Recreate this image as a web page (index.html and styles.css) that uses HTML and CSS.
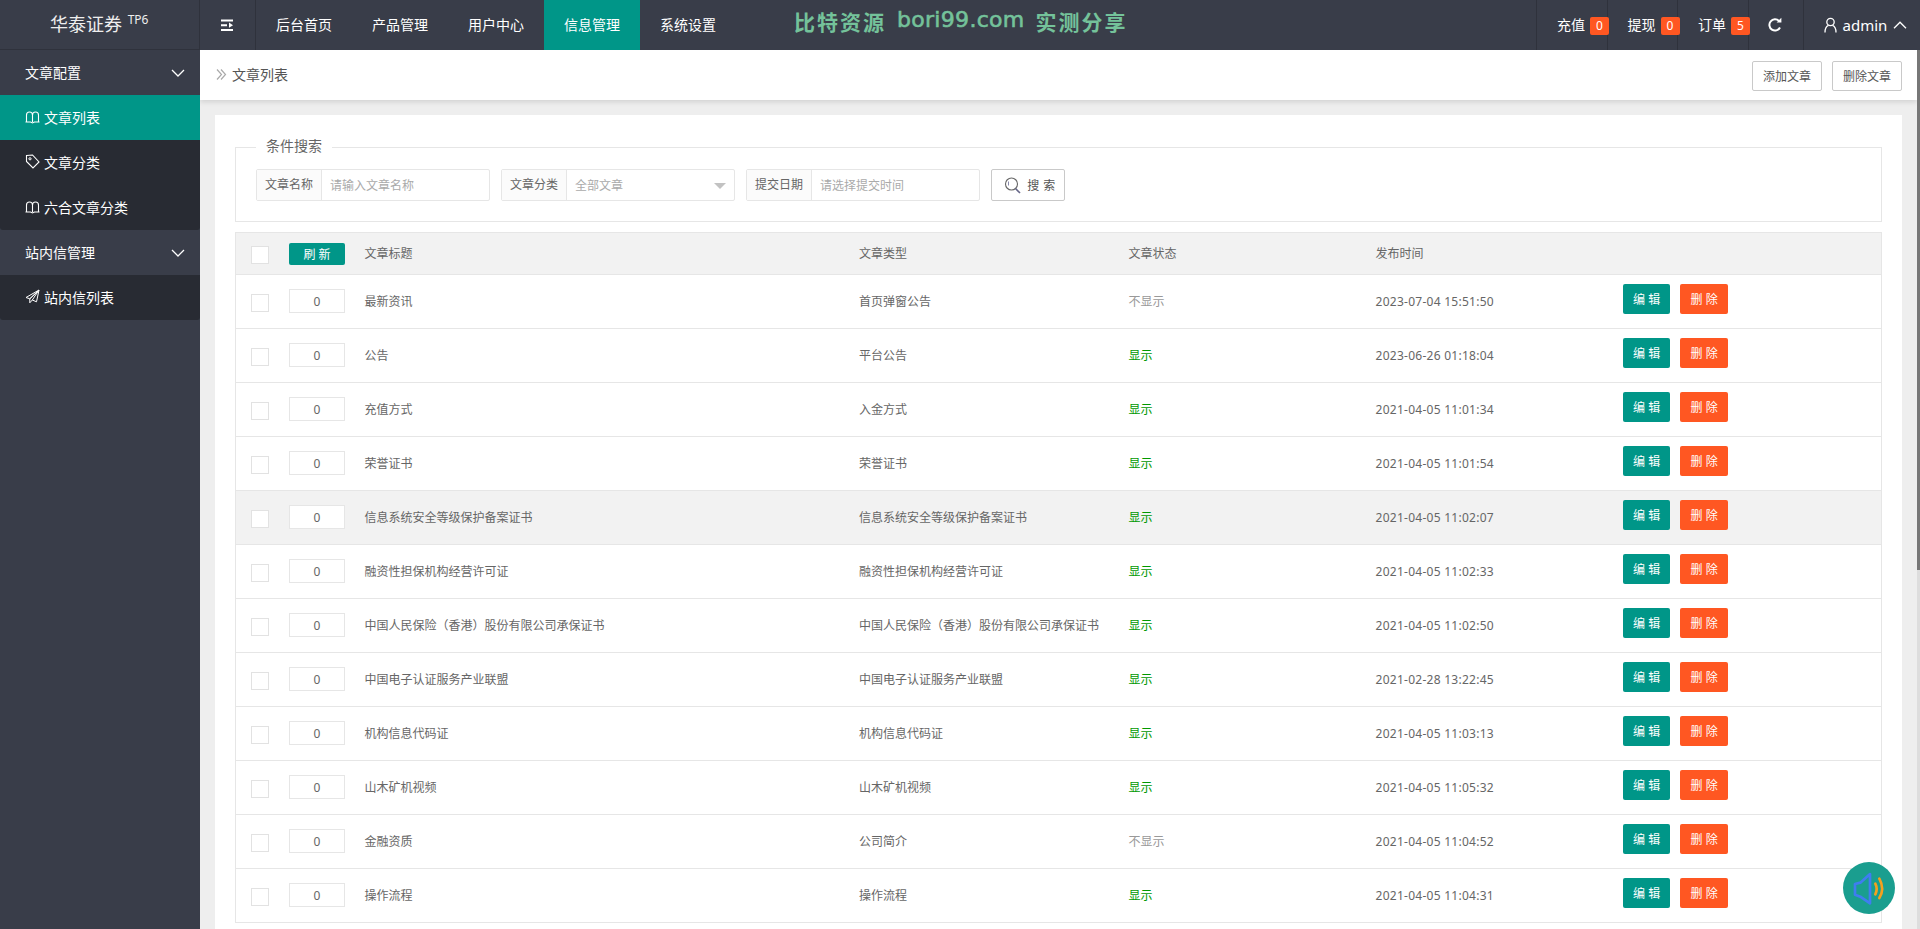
FILE: index.html
```html
<!DOCTYPE html>
<html lang="zh-CN">
<head>
<meta charset="utf-8">
<title>文章列表</title>
<link rel="stylesheet" href="styles.css">
</head>
<body>
<header class="topbar">
  <div class="logo">华泰证券 <sup>TP6</sup></div>
  <div class="toggle">
    <svg width="14" height="14" viewBox="0 0 14 14"><path d="M1 2.5H13M1 12H13M1 7.2H7" stroke="#fff" stroke-width="2" fill="none"/><path d="M9 4.6L13 7.2L9 9.8Z" fill="#fff"/></svg>
  </div>
  <nav class="mainnav">
    <a class="navitem">后台首页</a>
    <a class="navitem">产品管理</a>
    <a class="navitem">用户中心</a>
    <a class="navitem active">信息管理</a>
    <a class="navitem">系统设置</a>
  </nav>
  <div class="brandmark"><span>比特资源</span><span class="brandlatin">bori99.com</span><span>实测分享</span></div>
  <div class="topright">
    <div class="stat">充值<span class="badge">0</span></div>
    <div class="stat">提现<span class="badge">0</span></div>
    <div class="stat">订单<span class="badge">5</span></div>
    <div class="refresh">
      <svg width="16" height="16" viewBox="0 0 16 16"><path d="M13 10.5A5.6 5.6 0 1 1 12 4" stroke="#fff" stroke-width="2" fill="none"/><path d="M9.6 5.4H14.4V0.8Z" fill="#fff"/></svg>
    </div>
    <div class="user">
      <svg width="13" height="16" viewBox="0 0 13 16"><circle cx="6.5" cy="5" r="3.7" stroke="#fff" stroke-width="1.3" fill="none"/><path d="M1 15.5C1 11 3 9 4.5 8.4M12 15.5C12 11 10 9 8.5 8.4" stroke="#fff" stroke-width="1.3" fill="none"/></svg>
      <span class="username">admin</span>
      <svg width="14" height="8" viewBox="0 0 14 8"><path d="M1 7.2L7 1.2L13 7.2" stroke="#fff" stroke-width="1.3" fill="none"/></svg>
    </div>
  </div>
</header>
<div class="shell">
  <aside class="sidebar">
    <div class="group">文章配置<svg class="chev" width="14" height="8" viewBox="0 0 14 8"><path d="M1 1L7 7L13 1" stroke="#fff" stroke-width="1.3" fill="none"/></svg></div>
    <ul class="sublist">
      <li class="subitem current"><svg width="15" height="14" viewBox="0 0 15 14"><path d="M1.500 12V5C1.500 3 3 2 4.500 2C6 2 7.500 3 7.500 5C7.500 3 9 2 10.500 2C12 2 13.500 3 13.500 5V12M.5 12H5.500L7.500 13L9.500 12H14.500M7.500 5V12" stroke="#fff" stroke-width="1.100" fill="none"/></svg>文章列表</li>
      <li class="subitem"><svg width="15" height="15" viewBox="0 0 15 15"><path d="M1.500 1.500L7.500 1L14 8L8 14L1.500 7.500Z" stroke="#fff" stroke-width="1.100" fill="none"/><circle cx="5" cy="4.800" r="1.100" stroke="#fff" fill="none"/></svg>文章分类</li>
      <li class="subitem"><svg width="15" height="14" viewBox="0 0 15 14"><path d="M1.500 12V5C1.500 3 3 2 4.500 2C6 2 7.500 3 7.500 5C7.500 3 9 2 10.500 2C12 2 13.500 3 13.500 5V12M.5 12H5.500L7.500 13L9.500 12H14.500M7.500 5V12" stroke="#fff" stroke-width="1.100" fill="none"/></svg>六合文章分类</li>
    </ul>
    <div class="group">站内信管理<svg class="chev" width="14" height="8" viewBox="0 0 14 8"><path d="M1 1L7 7L13 1" stroke="#fff" stroke-width="1.3" fill="none"/></svg></div>
    <ul class="sublist">
      <li class="subitem"><svg width="15" height="15" viewBox="0 0 15 15"><path d="M14 1L1 8.500L4.800 9.800ZM14 1L4.800 9.800V13.800L7.300 11ZM14 1L11.500 12.800L7.300 11" stroke="#fff" stroke-width="1" fill="none"/></svg>站内信列表</li>
    </ul>
  </aside>
  <main class="main">
    <div class="pagehead">
      <div class="crumb">
        <svg width="11" height="11" viewBox="0 0 11 11"><path d="M1 .5L5.500 5.500L1 10.500M5 .5L9.500 5.500L5 10.500" stroke="#aaa" stroke-width="1.200" fill="none"/></svg>
        <span>文章列表</span>
      </div>
      <div class="headactions">
        <button class="btn-outline">添加文章</button>
        <button class="btn-outline">删除文章</button>
      </div>
    </div>
    <section class="card">
      <fieldset class="searchbox">
        <legend>条件搜索</legend>
        <form class="searchrow">
          <div class="field"><label class="fieldlabel">文章名称</label><input class="fieldinput" placeholder="请输入文章名称"></div>
          <div class="field select"><label class="fieldlabel">文章分类</label><input class="fieldinput" placeholder="全部文章"><i class="caret"></i></div>
          <div class="field"><label class="fieldlabel">提交日期</label><input class="fieldinput" placeholder="请选择提交时间"></div>
          <button type="button" class="btn-search">
            <svg width="18" height="17" viewBox="0 0 18 17"><circle cx="7.500" cy="7" r="6" stroke="#666" stroke-width="1.100" fill="none"/><path d="M4.500 4.500V8.500" stroke="#88a" fill="none"/><path d="M11.500 11.500L16 16" stroke="#668" stroke-width="1.600" fill="none"/></svg>
            <span class="searchlabel">搜 索</span>
          </button>
        </form>
      </fieldset>
      <table class="datatable">
        <colgroup>
          <col class="c1"><col class="c2"><col class="c3"><col class="c4"><col class="c5"><col class="c6"><col>
        </colgroup>
        <thead>
          <tr>
            <th><span class="check headcheck"></span></th>
            <th><button class="btn-refresh">刷 新</button></th>
            <th>文章标题</th><th>文章类型</th><th>文章状态</th><th>发布时间</th><th></th>
          </tr>
        </thead>
        <tbody>
          <tr><td><span class="check"></span></td><td><input class="sort" value="0"></td><td>最新资讯</td><td>首页弹窗公告</td><td class="off">不显示</td><td class="time">2023-07-04 15:51:50</td><td class="ops"><button class="btn-edit">编 辑</button><button class="btn-del">删 除</button></td></tr>
          <tr><td><span class="check"></span></td><td><input class="sort" value="0"></td><td>公告</td><td>平台公告</td><td class="on">显示</td><td class="time">2023-06-26 01:18:04</td><td class="ops"><button class="btn-edit">编 辑</button><button class="btn-del">删 除</button></td></tr>
          <tr><td><span class="check"></span></td><td><input class="sort" value="0"></td><td>充值方式</td><td>入金方式</td><td class="on">显示</td><td class="time">2021-04-05 11:01:34</td><td class="ops"><button class="btn-edit">编 辑</button><button class="btn-del">删 除</button></td></tr>
          <tr><td><span class="check"></span></td><td><input class="sort" value="0"></td><td>荣誉证书</td><td>荣誉证书</td><td class="on">显示</td><td class="time">2021-04-05 11:01:54</td><td class="ops"><button class="btn-edit">编 辑</button><button class="btn-del">删 除</button></td></tr>
          <tr class="hovered"><td><span class="check"></span></td><td><input class="sort" value="0"></td><td>信息系统安全等级保护备案证书</td><td>信息系统安全等级保护备案证书</td><td class="on">显示</td><td class="time">2021-04-05 11:02:07</td><td class="ops"><button class="btn-edit">编 辑</button><button class="btn-del">删 除</button></td></tr>
          <tr><td><span class="check"></span></td><td><input class="sort" value="0"></td><td>融资性担保机构经营许可证</td><td>融资性担保机构经营许可证</td><td class="on">显示</td><td class="time">2021-04-05 11:02:33</td><td class="ops"><button class="btn-edit">编 辑</button><button class="btn-del">删 除</button></td></tr>
          <tr><td><span class="check"></span></td><td><input class="sort" value="0"></td><td>中国人民保险（香港）股份有限公司承保证书</td><td>中国人民保险（香港）股份有限公司承保证书</td><td class="on">显示</td><td class="time">2021-04-05 11:02:50</td><td class="ops"><button class="btn-edit">编 辑</button><button class="btn-del">删 除</button></td></tr>
          <tr><td><span class="check"></span></td><td><input class="sort" value="0"></td><td>中国电子认证服务产业联盟</td><td>中国电子认证服务产业联盟</td><td class="on">显示</td><td class="time">2021-02-28 13:22:45</td><td class="ops"><button class="btn-edit">编 辑</button><button class="btn-del">删 除</button></td></tr>
          <tr><td><span class="check"></span></td><td><input class="sort" value="0"></td><td>机构信息代码证</td><td>机构信息代码证</td><td class="on">显示</td><td class="time">2021-04-05 11:03:13</td><td class="ops"><button class="btn-edit">编 辑</button><button class="btn-del">删 除</button></td></tr>
          <tr><td><span class="check"></span></td><td><input class="sort" value="0"></td><td>山木矿机视频</td><td>山木矿机视频</td><td class="on">显示</td><td class="time">2021-04-05 11:05:32</td><td class="ops"><button class="btn-edit">编 辑</button><button class="btn-del">删 除</button></td></tr>
          <tr><td><span class="check"></span></td><td><input class="sort" value="0"></td><td>金融资质</td><td>公司简介</td><td class="off">不显示</td><td class="time">2021-04-05 11:04:52</td><td class="ops"><button class="btn-edit">编 辑</button><button class="btn-del">删 除</button></td></tr>
          <tr><td><span class="check"></span></td><td><input class="sort" value="0"></td><td>操作流程</td><td>操作流程</td><td class="on">显示</td><td class="time">2021-04-05 11:04:31</td><td class="ops"><button class="btn-edit">编 辑</button><button class="btn-del">删 除</button></td></tr>
        </tbody>
      </table>
    </section>
  </main>
  <div class="scrolltrack"><div class="scrollthumb"></div></div>
</div>
<div class="floatbtn">
  <svg width="52" height="52" viewBox="0 0 156 156"><path d="M81 36L52 62L36 66V98L52 104L81 124Z" stroke="#3f7df0" stroke-width="8" stroke-linejoin="round" fill="none"/><path d="M97 65Q105 81 97 97M109 50Q126 81 109 108" stroke="#f5a01e" stroke-width="8" stroke-linecap="round" fill="none"/></svg>
</div>
</body>
</html>
```
FILE: styles.css
```css
* { box-sizing: border-box; }
html, body { margin: 0; height: 100%; overflow: hidden; }
body {
  display: flex;
  flex-direction: column;
  font-family: "Noto Sans", "Noto Sans CJK SC", sans-serif;
  font-size: 14px;
  color: #666;
  background: #eee;
}
button, input { font-family: inherit; }

/* top bar */
.topbar {
  flex: none;
  height: 50px;
  display: flex;
  align-items: stretch;
  background: #393d49;
  color: #fff;
}
.logo {
  width: 200px;
  border-right: 1px solid #2f323c;
  border-bottom: 1px solid #2f323c;
  padding-left: 50px;
  font-size: 18px;
  line-height: 48px;
  color: #eee;
  white-space: nowrap;
}
.logo sup { font-size: 12px; line-height: 0; vertical-align: 7px; margin-left: 1px; }
.toggle {
  width: 56px;
  border-right: 1px solid #2f323c;
  display: flex;
  align-items: center;
  justify-content: center;
  padding-right: 1px;
}
.mainnav { display: flex; }
.navitem {
  width: 96px;
  text-align: center;
  line-height: 50px;
  color: #fff;
}
.navitem.active { background: #009688; }
.brandmark {
  margin-left: 58px;
  display: flex;
  gap: 11px;
  align-items: flex-start;
  padding-top: 7px;
  font-size: 21px;
  font-weight: 700;
  line-height: 30px;
  letter-spacing: 2px;
  color: #74c29a;
  white-space: nowrap;
}
.brandlatin {
  font-family: "DejaVu Sans", sans-serif;
  font-size: 22px;
  font-weight: 400;
  letter-spacing: .3px;
  line-height: 26px;
  -webkit-text-stroke: .6px #74c29a;
}
.topright { margin-left: auto; display: flex; width: 384px; }
.stat {
  position: relative;
  width: 70.500px;
  border-left: 1px solid #2f323c;
  padding-left: 20px;
  line-height: 50px;
}
.badge {
  position: absolute;
  left: 53px;
  top: 17px;
  width: 19px;
  height: 18px;
  line-height: 18px;
  border-radius: 2px;
  background: #ff5722;
  color: #fff;
  font-size: 12px;
  text-align: center;
  z-index: 1;
}
.refresh {
  width: 55px;
  border-left: 1px solid #2f323c;
  display: flex;
  align-items: center;
  padding-left: 18px;
}
.user {
  flex: 1;
  border-left: 1px solid #2f323c;
  display: flex;
  align-items: center;
  padding-left: 20px;
}
.username { margin: 0 6px 0 6px; font-size: 15px; }

/* shell */
.shell { flex: 1; min-height: 0; display: flex; }
.sidebar { flex: none; width: 200px; background: #393d49; color: #fff; }
.group {
  height: 45px;
  line-height: 45px;
  padding-left: 25px;
  position: relative;
}
.chev { position: absolute; left: 171px; top: 19px; }
.sublist {
  list-style: none;
  margin: 0;
  padding: 0;
  background: #282b33;
  border-radius: 0 0 3px 3px;
}
.subitem {
  height: 45px;
  display: flex;
  align-items: center;
  gap: 4px;
  padding: 0 0 2px 25px;
}
.subitem.current { background: #009688; }

/* main */
.main {
  flex: 1;
  min-width: 0;
  overflow: hidden;
  background: #eee;
}
.scrolltrack { flex: none; width: 3px; background: #ddd; }
.scrollthumb { height: 520px; background: #777; }
.pagehead {
  height: 50px;
  background: #fff;
  box-shadow: 0 2px 5px rgba(0, 0, 0, .12);
  display: flex;
  align-items: center;
  justify-content: space-between;
  padding: 0 15px 0 16px;
  position: relative;
}
.crumb { display: flex; align-items: center; gap: 5px; color: #555; margin-bottom: 2px; }
.headactions { display: flex; gap: 10px; margin-top: 2px; }
.btn-outline {
  width: 70px;
  height: 30px;
  padding: 0;
  background: #fff;
  border: 1px solid #c9c9c9;
  border-radius: 2px;
  color: #555;
  font-size: 12px;
}
.card {
  margin: 15px;
  min-height: 1400px;
  padding: 22px 20px;
  background: #fff;
}
.searchbox {
  margin: 0;
  padding: 12px 20px 20px;
  border: 1px solid #e6e6e6;
  min-width: 0;
}
.searchbox legend {
  margin-left: 0;
  padding: 0 10px;
  height: 20px;
  font-size: 14px;
  line-height: 18px;
  color: #666;
}
.searchrow { display: flex; gap: 11px; }
.field {
  position: relative;
  width: 234px;
  height: 32px;
  display: flex;
  border: 1px solid #e6e6e6;
  border-radius: 2px;
}
.fieldlabel {
  flex: none;
  width: 65px;
  border-right: 1px solid #e6e6e6;
  background: #fbfbfb;
  font-size: 12px;
  line-height: 30px;
  text-align: center;
  color: #666;
}
.fieldinput {
  flex: 1;
  min-width: 0;
  border: 0;
  outline: 0;
  padding: 0 0 0 8px;
  font-size: 12px;
  color: #666;
  background: transparent;
}
.fieldinput::placeholder { color: #aaa; opacity: 1; }
.caret {
  position: absolute;
  right: 8px;
  top: 13px;
  border: 6px solid transparent;
  border-top-color: #c2c2c2;
  border-bottom: 0;
}
.btn-search {
  width: 74px;
  height: 32px;
  padding: 0 0 0 4px;
  display: flex;
  align-items: center;
  justify-content: center;
  gap: 5px;
  background: #fff;
  border: 1px solid #c9c9c9;
  border-radius: 2px;
  color: #555;
  font-size: 12px;
}
.searchlabel { letter-spacing: .5px; }

/* table */
.datatable {
  width: 100%;
  margin-top: 10px;
  table-layout: fixed;
  border-collapse: separate;
  border-spacing: 0;
  border: 1px solid #e6e6e6;
  border-bottom: 0;
  font-size: 12px;
}
.c1 { width: 38px; }
.c2 { width: 75.500px; }
.c3 { width: 494.500px; }
.c4 { width: 269.600px; }
.c5 { width: 247px; }
.c6 { width: 247.500px; }
.datatable th, .datatable td {
  padding: 0 0 0 15px;
  border-bottom: 1px solid #e6e6e6;
  font-weight: 400;
  text-align: left;
  vertical-align: top;
  white-space: nowrap;
}
.datatable th {
  height: 42px;
  line-height: 41px;
  background: #f2f2f2;
  color: #666;
}
.datatable td { height: 54px; line-height: 53px; color: #666; }
.datatable .hovered td { background: #f2f2f2; }
.check {
  display: block;
  width: 18px;
  height: 18px;
  margin-top: 19px;
  background: #fff;
  border: 1px solid #e2e2e2;
}
.check.headcheck { margin-top: 13px; }
.btn-refresh {
  display: block;
  width: 56px;
  height: 22px;
  margin-top: 10px;
  padding: 0;
  border: 0;
  border-radius: 2px;
  background: #009688;
  color: #fff;
  font-size: 12px;
}
.sort {
  display: block;
  width: 56px;
  height: 24px;
  margin-top: 14px;
  padding: 0;
  border: 1px solid #e6e6e6;
  background: #fff;
  color: #666;
  font-size: 12px;
  text-align: center;
  outline: 0;
}
.datatable td.on { color: #090; }
.datatable td.off { color: #999; }
.time { letter-spacing: .26px; }
.ops button {
  float: left;
  height: 30px;
  margin-top: 9px;
  padding: 0;
  border: 0;
  border-radius: 2px;
  color: #fff;
  font-size: 12px;
}
.btn-edit { width: 47px; background: #009688; }
.btn-del { width: 48px; margin-left: 10px; background: #ff5722; }

/* floating speaker */
.floatbtn {
  position: fixed;
  left: 1843px;
  top: 862px;
  width: 52px;
  height: 52px;
  border-radius: 50%;
  background: #1a9e8f;
}
.floatbtn svg { display: block; }
```
